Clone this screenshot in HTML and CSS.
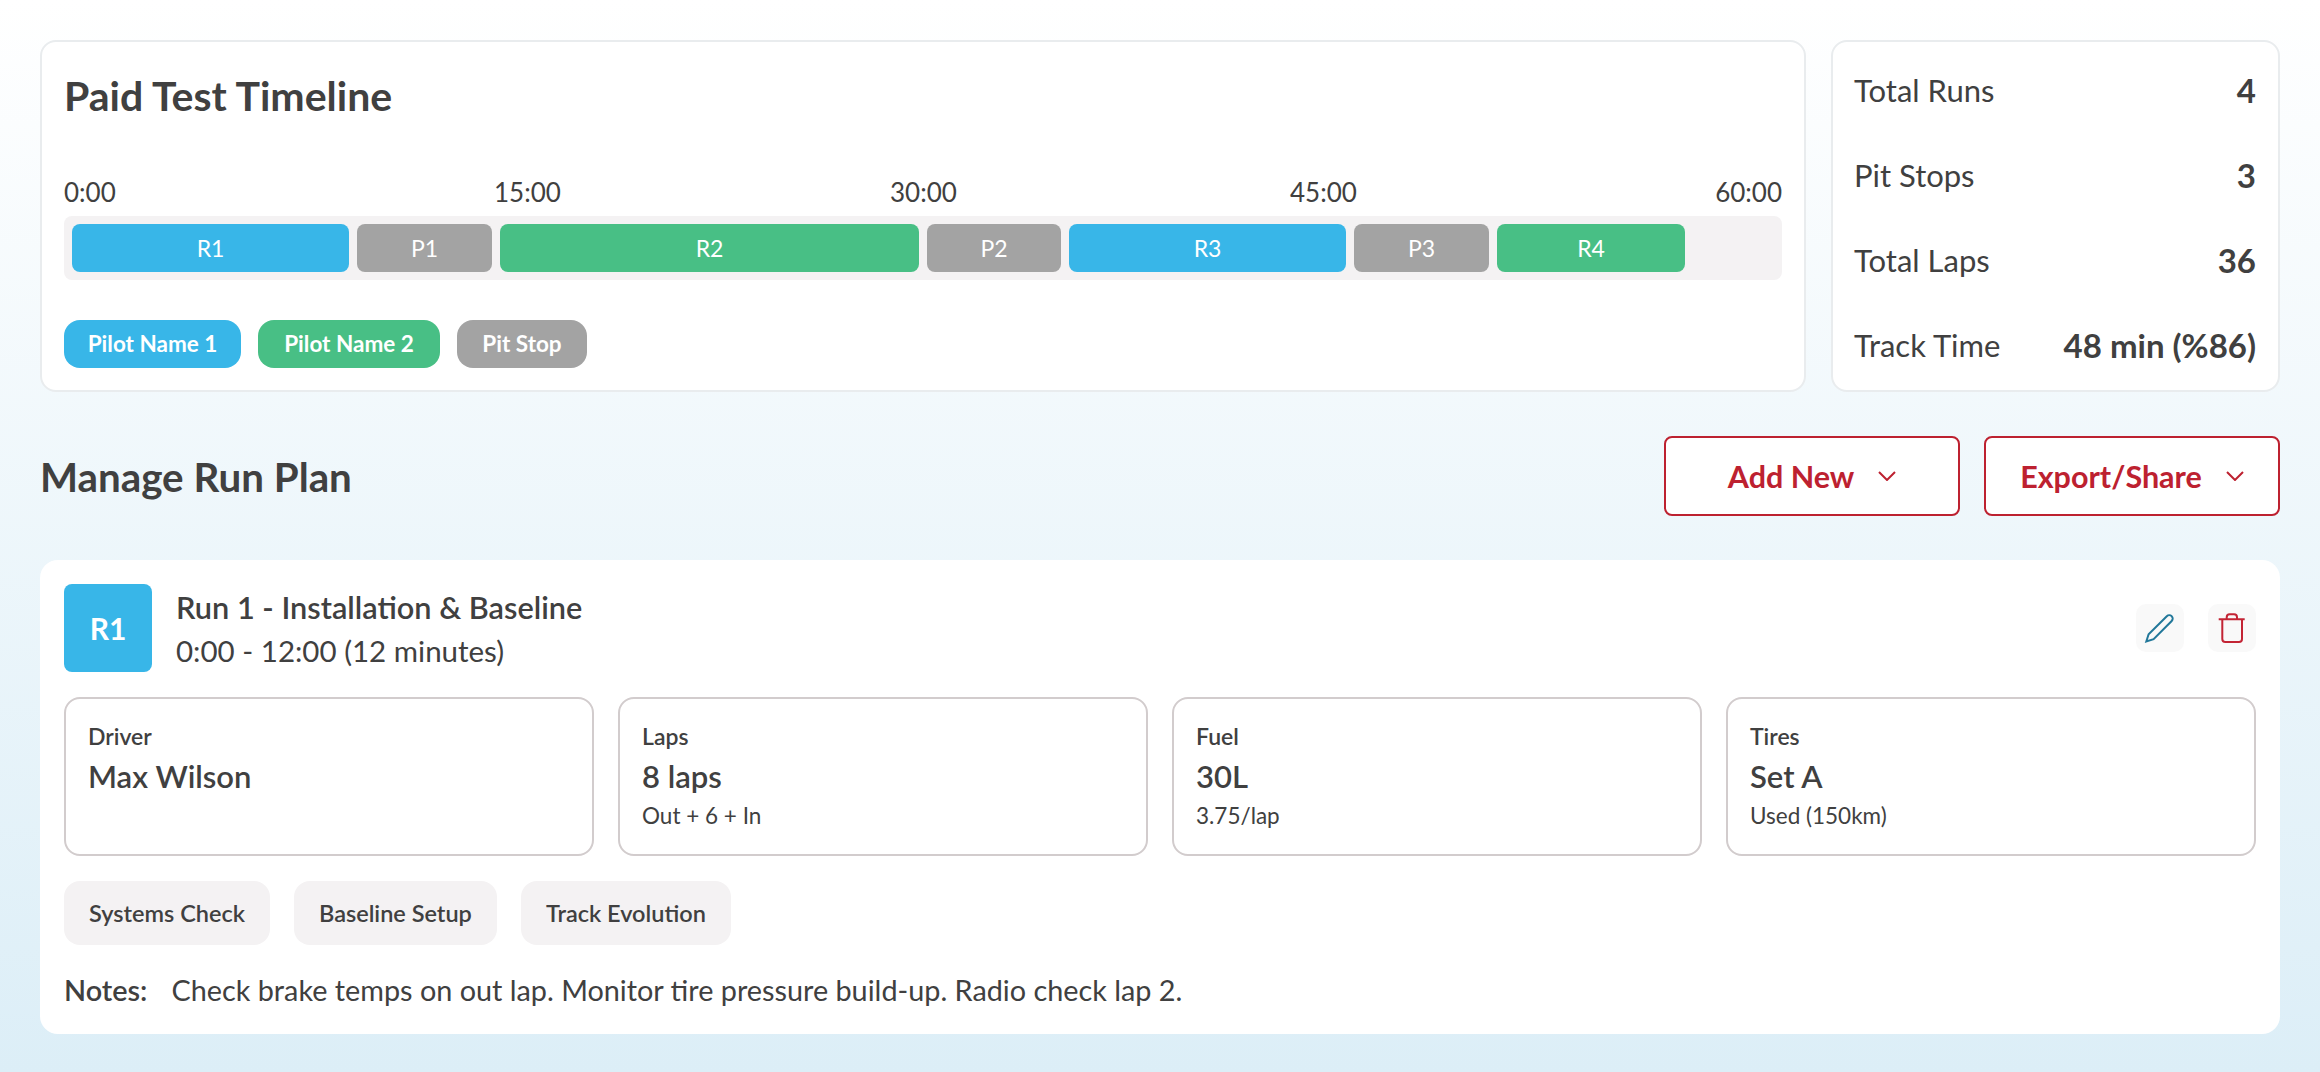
FILE: index.html
```html
<!DOCTYPE html>
<html lang="en">
<head>
<meta charset="utf-8">
<title>Paid Test Timeline</title>
<link rel="stylesheet" href="styles.css">
</head>
<body>
<main class="page">
  <section class="top">
    <div class="card timeline">
      <h1 class="title">Paid Test Timeline</h1>
      <div class="ticks"><span>0:00</span><span>15:00</span><span>30:00</span><span>45:00</span><span>60:00</span></div>
      <div class="track">
        <div class="seg blue" style="width:277px">R1</div>
        <div class="seg gray" style="width:135px">P1</div>
        <div class="seg green" style="width:419px">R2</div>
        <div class="seg gray" style="width:134px">P2</div>
        <div class="seg blue" style="width:277px">R3</div>
        <div class="seg gray" style="width:135px">P3</div>
        <div class="seg green" style="width:188px">R4</div>
      </div>
      <div class="legend">
        <span class="pill blue">Pilot Name 1</span>
        <span class="pill green">Pilot Name 2</span>
        <span class="pill gray">Pit Stop</span>
      </div>
    </div>
    <div class="card stats">
      <div class="stat"><span>Total Runs</span><b>4</b></div>
      <div class="stat"><span>Pit Stops</span><b>3</b></div>
      <div class="stat"><span>Total Laps</span><b>36</b></div>
      <div class="stat"><span>Track Time</span><b>48 min (%86)</b></div>
    </div>
  </section>

  <section class="manage">
    <h2 class="manage-title">Manage Run Plan</h2>
    <div class="actions">
      <button class="btn btn-add">Add New
        <svg class="chev" viewBox="0 0 18 10"><path d="M1 1l8 8 8-8"/></svg>
      </button>
      <button class="btn btn-export">Export/Share
        <svg class="chev" viewBox="0 0 18 10"><path d="M1 1l8 8 8-8"/></svg>
      </button>
    </div>
  </section>

  <article class="run">
    <header class="run-head">
      <div class="badge">R1</div>
      <div class="run-text">
        <h3 class="run-title">Run 1 - Installation &amp; Baseline</h3>
        <p class="run-time">0:00 - 12:00 (12 minutes)</p>
      </div>
      <div class="tools">
        <button class="tool" aria-label="Edit">
          <svg viewBox="0 0 32 32" class="ico ico-edit"><path d="M2.300 29.500l2.300-7.200L22.800 4.200a3.400 3.400 0 0 1 4.900 4.800L9.600 27.200z"/></svg>
        </button>
        <button class="tool" aria-label="Delete">
          <svg viewBox="0 0 32 32" class="ico ico-del"><path d="M2.700 7.200h26M6.300 7v20a3 3 0 0 0 3 3H23a3 3 0 0 0 3-3V7M10.700 7V5.300a3 3 0 0 1 3-3H18a3 3 0 0 1 3 3V7"/></svg>
        </button>
      </div>
    </header>
    <div class="info">
      <div class="box"><div class="box-label">Driver</div><div class="box-value">Max Wilson</div></div>
      <div class="box"><div class="box-label">Laps</div><div class="box-value">8 laps</div><div class="box-sub">Out + 6 + In</div></div>
      <div class="box"><div class="box-label">Fuel</div><div class="box-value">30L</div><div class="box-sub">3.75/lap</div></div>
      <div class="box"><div class="box-label">Tires</div><div class="box-value">Set A</div><div class="box-sub">Used (150km)</div></div>
    </div>
    <div class="tags">
      <span class="tag">Systems Check</span>
      <span class="tag">Baseline Setup</span>
      <span class="tag">Track Evolution</span>
    </div>
    <p class="notes"><b>Notes:</b><span>Check brake temps on out lap. Monitor tire pressure build-up. Radio check lap 2.</span></p>
  </article>
</main>
</body>
</html>
```
FILE: styles.css
```css
* { box-sizing: border-box; }
html, body { margin: 0; height: 100%; }
body {
  font-family: "Lato", "Noto Sans", sans-serif;
  color: #404040;
  background: linear-gradient(180deg, #ffffff 0%, #dceef7 100%);
  overflow: hidden;
}
h1, h2, h3, p { margin: 0; }
.page { padding: 40px; }

.top { display: flex; gap: 25px; }
.card { background: #fff; border: 2px solid #e9ecee; border-radius: 16px; }
.timeline { flex: 1; padding: 24px 22px 22px; }
.title { font-size: 41px; font-weight: 700; line-height: 60px; }
.ticks { display: grid; grid-template-columns: 430px 396px 400px 423px 1fr; margin-top: 50px; font-size: 26px; line-height: 32px; height: 32px; }
.ticks span:last-child { justify-self: end; }
.track { display: flex; gap: 8px; height: 64px; margin-top: 8px; padding: 8px; background: #f4f2f3; border-radius: 8px; }
.seg { display: flex; align-items: center; justify-content: center; border-radius: 8px; color: #fff; font-size: 23px; }
.blue { background: #38b6e8; }
.green { background: #48bf85; }
.gray { background: #a3a3a3; }
.legend { display: grid; grid-template-columns: 177px 182px 130px; gap: 17px; margin-top: 40px; }
.pill { height: 48px; line-height: 48px; text-align: center; border-radius: 16px; color: #fff; font-size: 22.500px; font-weight: 700; }

.stats { width: 449px; padding: 5px 22px 3px 21px; }
.stat { display: flex; align-items: center; justify-content: space-between; height: 85px; font-size: 31px; }
.stat b { font-weight: 700; font-size: 33px; }

.manage { display: flex; align-items: center; justify-content: space-between; margin-top: 44px; }
.manage-title { font-size: 40.300px; font-weight: 700; }
.actions { display: flex; gap: 24px; }
.btn { display: flex; align-items: center; justify-content: center; gap: 24px; width: 296px; height: 80px; border: 2px solid #bd2130; border-radius: 8px; background: #fff; color: #bd2130; font: 700 30.500px "Lato", sans-serif; }
.chev { width: 18px; height: 10px; fill: none; stroke: #bd2130; stroke-width: 2; }

.run { margin-top: 44px; padding: 24px; background: #fff; border-radius: 18px; }
.run-head { display: flex; align-items: center; }
.badge { display: flex; align-items: center; justify-content: center; width: 88px; height: 88px; border-radius: 8px; background: #38b6e8; color: #fff; font-size: 30px; font-weight: 700; }
.run-text { flex: 1; margin-left: 24px; padding-top: 2px; }
.run-title { font-size: 30.700px; font-weight: 600; line-height: 44px; }
.run-time { font-size: 29.500px; line-height: 42px; }
.tools { display: flex; gap: 24px; }
.tool { display: flex; align-items: center; justify-content: center; width: 48px; height: 48px; padding: 0; border: 0; border-radius: 10px; background: #f9f9f9; }
.ico { width: 32px; height: 32px; fill: none; stroke-width: 2; }
.ico-edit { stroke: #22789a; }
.ico-del { stroke: #c32434; }

.info { display: grid; grid-template-columns: repeat(4, 1fr); gap: 24px; margin-top: 25px; }
.box { height: 159px; padding: 23px 22px 22px; border: 2px solid #d2cccd; border-radius: 16px; }
.box-label { font-size: 23px; font-weight: 600; line-height: 28px; }
.box-value { font-size: 31px; font-weight: 600; line-height: 44px; margin-top: 4px; }
.box-sub { font-size: 22.500px; line-height: 28px; margin-top: 4px; }

.tags { display: flex; gap: 24px; margin-top: 25px; }
.tag { height: 64px; line-height: 64px; padding: 0 25px; border-radius: 16px; background: #f4f2f3; font-size: 23.500px; font-weight: 600; }

.notes { display: flex; gap: 24px; margin-top: 25px; font-size: 28.800px; line-height: 40px; }
.notes b { font-weight: 600; }
```
